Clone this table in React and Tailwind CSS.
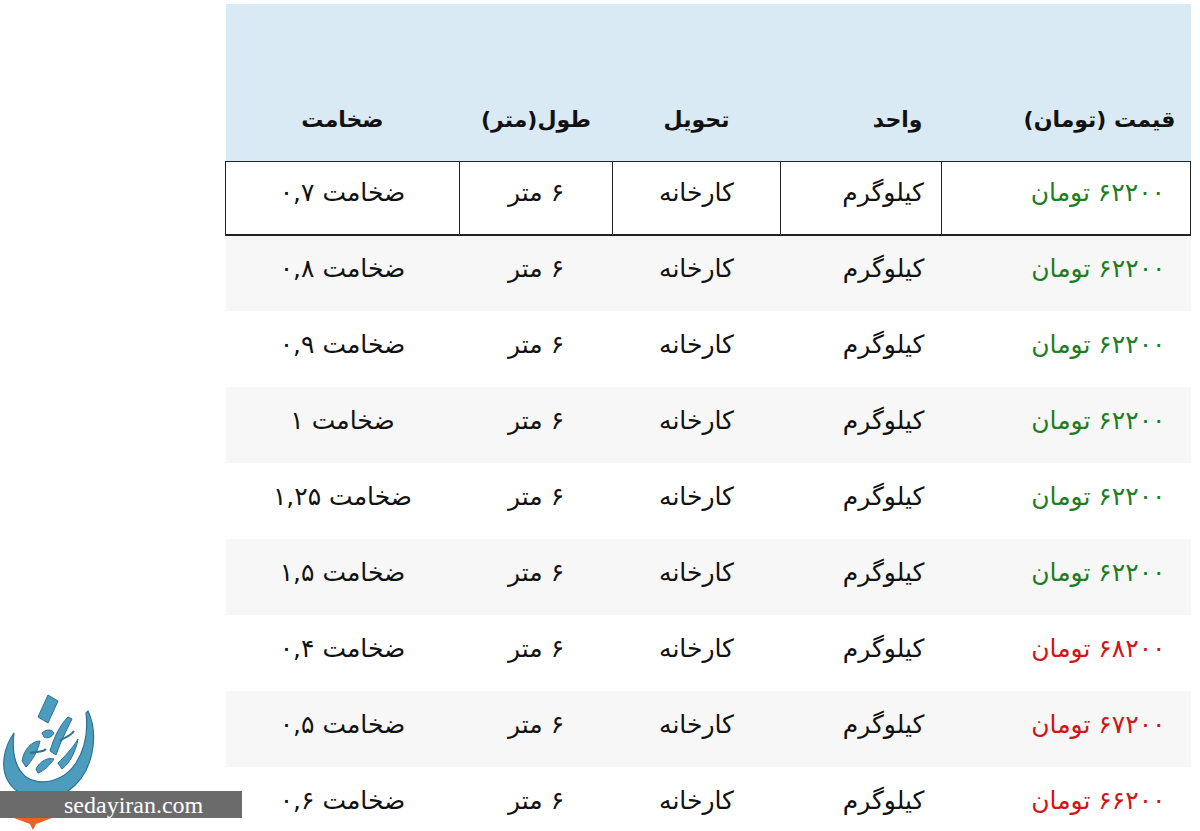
import React from "react";

const rows = [
  { price: "۶۲۲۰۰", tone: "green", size: "۰,۷" },
  { price: "۶۲۲۰۰", tone: "green", size: "۰,۸" },
  { price: "۶۲۲۰۰", tone: "green", size: "۰,۹" },
  { price: "۶۲۲۰۰", tone: "green", size: "۱" },
  { price: "۶۲۲۰۰", tone: "green", size: "۱,۲۵" },
  { price: "۶۲۲۰۰", tone: "green", size: "۱,۵" },
  { price: "۶۸۲۰۰", tone: "red", size: "۰,۴" },
  { price: "۶۷۲۰۰", tone: "red", size: "۰,۵" },
  { price: "۶۶۲۰۰", tone: "red", size: "۰,۶" },
];

function Logo() {
  const fill = "#4b9cbd";
  const line = "#2f7090";
  return (
    <div className="absolute left-0 bottom-0 w-[245px] h-[140px] pointer-events-none" aria-hidden="true">
      <svg className="absolute left-0 top-0" width="100" height="112" viewBox="0 0 100 112">
        {/* big bowl */}
        <path
          d="M88 20 C99 44 94 82 68 100 C48 112 18 108 8 90 C0 76 4 56 14 42 C12 58 14 76 26 86 C42 96 64 90 76 72 C86 56 88 38 86 22 Z"
          fill={fill}
          stroke={line}
          strokeWidth="1.2"
        />
        {/* diamond dot */}
        <path d="M38 26 L48 4 L58 10 L48 32 Z" fill={fill} stroke={line} strokeWidth="1" />
        {/* inner calligraphy strokes */}
        <path d="M22 70 C24 58 32 50 40 50 C38 60 32 70 26 76 Z" fill={fill} stroke={line} strokeWidth="1" />
        <path d="M36 78 C40 70 48 66 54 68 C50 74 44 80 38 82 Z" fill={fill} stroke={line} strokeWidth="1" />
        <path d="M50 60 C54 46 60 34 68 26 L72 28 C66 40 60 52 56 64 Z" fill={fill} stroke={line} strokeWidth="1" />
        <path d="M42 42 C46 38 52 38 54 42 C52 46 48 48 44 46 Z" fill={fill} stroke={line} strokeWidth="1" />
        <path d="M58 72 C64 66 72 58 78 48 C76 60 70 72 62 78 Z" fill={fill} stroke={line} strokeWidth="1" />
        <path d="M60 50 C64 46 70 46 74 40" fill="none" stroke={line} strokeWidth="2" />
        <path d="M30 62 C36 60 42 62 46 58" fill="none" stroke={line} strokeWidth="2" />
      </svg>
      <div className="absolute left-0 top-[100px] w-[242px] h-[27px] bg-[#6b6b6b] flex items-center pl-[64px]">
        <span className="text-white text-[24px] leading-none font-['Liberation_Serif',serif]">
          sedayiran.com
        </span>
      </div>
      <svg className="absolute left-[14px] top-[127px]" width="38" height="13" viewBox="0 0 38 13">
        <path d="M0 0 L38 0 L22 6 L19 12 L16 6 Z" fill="#e8622a" />
      </svg>
    </div>
  );
}

export default function App() {
  const cell = "text-[25px] leading-none text-[#111] whitespace-nowrap";
  const head = "align-bottom pb-[30px] text-[22px] leading-none font-bold text-[#111] whitespace-nowrap";
  return (
    <div className="relative w-[1200px] h-[831px] overflow-hidden bg-white font-['DejaVu_Sans',sans-serif]">
      <div className="flex pt-[4px]">
        <div className="w-[225px] shrink-0" />
        <table dir="rtl" className="table-fixed border-collapse w-[965px]">
          <colgroup>
            <col className="w-[249px]" />
            <col className="w-[161px]" />
            <col className="w-[168px]" />
            <col className="w-[153px]" />
            <col className="w-[234px]" />
          </colgroup>
          <thead>
            <tr className="h-[157px] bg-[#d9eaf4]">
              <th className={`${head} text-right pr-[15px]`}>قیمت (تومان)</th>
              <th className={`${head} text-right pr-[19px]`}>واحد</th>
              <th className={`${head} text-center`}>تحویل</th>
              <th className={`${head} text-center`}>طول(متر)</th>
              <th className={`${head} text-center`}>ضخامت</th>
            </tr>
          </thead>
          <tbody>
            {rows.map((r, i) => {
              const first = i === 0;
              const bg = i % 2 === 1 ? "bg-[#f7f7f7]" : "bg-white";
              const bd = first ? "border border-[#222] border-b-2" : "";
              return (
                <tr key={i} className={`${first ? "h-[74px]" : "h-[76px]"} ${bg}`}>
                  <td className={`${bd} text-right pr-[25px] pb-[10px] text-[25px] leading-none whitespace-nowrap ${r.tone === "green" ? "text-[#1e7d1e]" : "text-[#d21414]"}`}>
                    <span className="tracking-[3px]">{r.price}</span> تومان
                  </td>
                  <td className={`${bd} ${cell} text-right pr-[17px] pb-[10px]`}>کیلوگرم</td>
                  <td className={`${bd} ${cell} text-center pb-[10px]`}>کارخانه</td>
                  <td className={`${bd} ${cell} text-center pb-[10px]`}>۶ متر</td>
                  <td className={`${bd} ${cell} text-center pb-[10px]`}>
                    ضخامت <span className="tracking-[2px]">{r.size}</span>
                  </td>
                </tr>
              );
            })}
          </tbody>
        </table>
      </div>
      <Logo />
    </div>
  );
}
